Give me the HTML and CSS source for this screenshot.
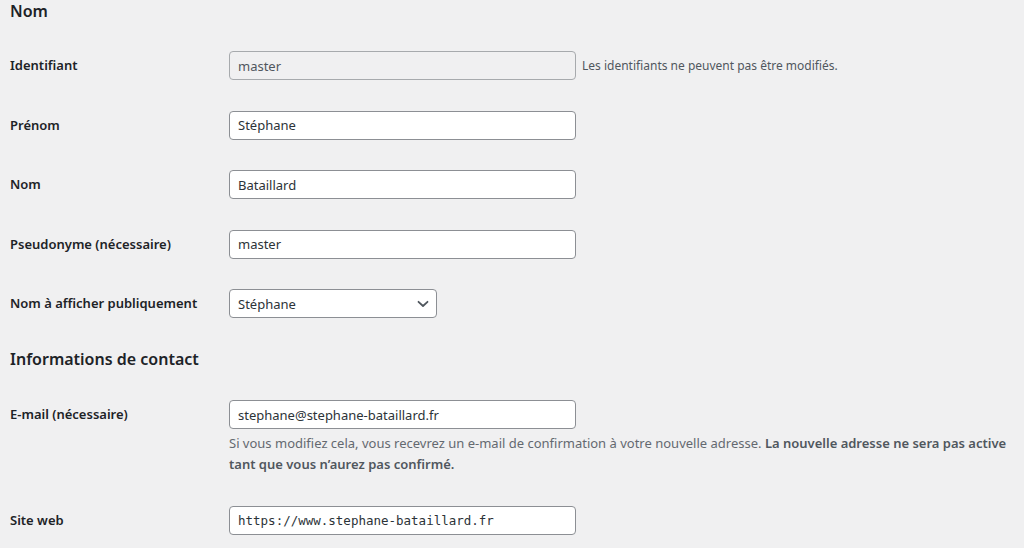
FILE: index.html
```html
<!DOCTYPE html>
<html lang="fr">
  <head>
    <meta charset="UTF-8">
    <meta name="viewport" content="width=device-width, initial-scale=1.0">
    <title>Profil</title>
    <link rel="stylesheet" href="styles.css">
  </head>
  <body>
    <div class="profile">

      <h2 class="section-title">Nom</h2>
      <div class="form-table">
        <div class="form-row">
          <label class="form-label" for="user_login">Identifiant</label>
          <div class="form-field inline">
            <input class="regular-text" id="user_login" type="text" value="master" disabled>
            <span class="note">Les identifiants ne peuvent pas être modifiés.</span>
          </div>
        </div>
        <div class="form-row">
          <label class="form-label" for="first_name">Prénom</label>
          <div class="form-field">
            <input class="regular-text" id="first_name" type="text" value="Stéphane">
          </div>
        </div>
        <div class="form-row">
          <label class="form-label" for="last_name">Nom</label>
          <div class="form-field">
            <input class="regular-text" id="last_name" type="text" value="Bataillard">
          </div>
        </div>
        <div class="form-row">
          <label class="form-label" for="nickname">Pseudonyme (nécessaire)</label>
          <div class="form-field">
            <input class="regular-text" id="nickname" type="text" value="master">
          </div>
        </div>
        <div class="form-row">
          <label class="form-label" for="display_name">Nom à afficher publiquement</label>
          <div class="form-field">
            <div class="select-wrap">
              <select id="display_name" class="select">
                <option>Stéphane</option>
                <option>master</option>
                <option>Bataillard</option>
                <option>Stéphane Bataillard</option>
              </select>
              <svg class="chevron" width="12" height="8" viewBox="0 0 12 8" aria-hidden="true">
                <path d="M1.5 1.8 L6 6 L10.5 1.8" fill="none" stroke="#50575e" stroke-width="1.8" stroke-linecap="round" stroke-linejoin="round"/>
              </svg>
            </div>
          </div>
        </div>
      </div>

      <h2 class="section-title spaced">Informations de contact</h2>
      <div class="form-table">
        <div class="form-row">
          <label class="form-label" for="email">E-mail (nécessaire)</label>
          <div class="form-field">
            <input class="regular-text" id="email" type="email" value="stephane@stephane-bataillard.fr">
            <p class="description">Si vous modifiez cela, vous recevrez un e-mail de confirmation à votre nouvelle adresse. <strong>La nouvelle adresse ne sera pas active tant que vous n’aurez pas confirmé.</strong></p>
          </div>
        </div>
        <div class="form-row">
          <label class="form-label" for="url">Site web</label>
          <div class="form-field">
            <input class="regular-text code" id="url" type="url" value="https://www.stephane-bataillard.fr">
          </div>
        </div>
      </div>

    </div>
  </body>
</html>
```

FILE: styles.css
```css
html, body {
  margin: 0;
  padding: 0;
  background-color: #f0f0f1;
  color: #1d2327;
  font-family: "Noto Sans", "Open Sans", sans-serif;
  font-size: 13px;
}
.profile {
  padding: 0 10px;
}
.section-title {
  margin: 0;
  font-size: 16px;
  line-height: 23px;
  font-weight: 600;
  color: #1d2327;
}
.section-title.spaced {
  margin-top: 14px;
}
.form-table {
  display: flex;
  flex-direction: column;
  margin-top: 13px;
}
.spaced + .form-table {
  margin-top: 14.5px;
}
.form-row {
  display: flex;
  align-items: flex-start;
  padding: 15px 0 15.5px 0;
}
.form-label {
  flex: 0 0 219px;
  line-height: 29px;
  font-size: 13px;
  font-weight: 600;
  color: #1d2327;
}
.form-field {
  display: flex;
  flex-direction: column;
  align-items: flex-start;
}
.form-field.inline {
  flex-direction: row;
  align-items: center;
  gap: 6px;
}
.regular-text,
.select {
  box-sizing: border-box;
  width: 347px;
  height: 29px;
  margin: 0;
  padding: 0 8px;
  border: 1px solid #8c8f94;
  border-radius: 4px;
  background-color: #fff;
  color: #2c3338;
  font-family: inherit;
  font-size: 13px;
  outline: none;
}
.regular-text:disabled {
  background-color: #f0f0f1;
  border-color: #a7aaad;
  color: #50575e;
}
.regular-text.code {
  font-family: "DejaVu Sans Mono", "Liberation Mono", monospace;
  font-size: 12.5px;
}
.note {
  font-size: 12px;
  color: #50575e;
}
.select-wrap {
  position: relative;
}
.select {
  width: 208px;
  appearance: none;
  -webkit-appearance: none;
  padding-right: 24px;
}
.chevron {
  position: absolute;
  right: 8px;
  top: 11px;
  pointer-events: none;
}
.description {
  margin: 4px 0 0 0;
  width: 790px;
  font-size: 13px;
  line-height: 21px;
  color: #646970;
}
.description strong {
  font-weight: 600;
  color: #50575e;
}
```
